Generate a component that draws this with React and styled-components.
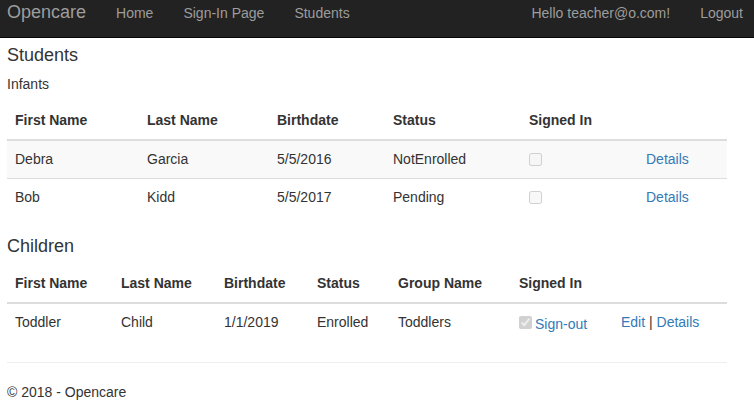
import styled, { createGlobalStyle } from "styled-components";

const GlobalStyle = createGlobalStyle`
  body {
    margin: 0;
    font-family: "Liberation Sans", Arial, sans-serif;
    font-size: 14px;
    line-height: 21px;
    color: #333;
    background: #fff;
  }
`;

const colors = {
  navBg: "#222",
  navBorder: "#080808",
  navText: "#9d9d9d",
  link: "#337ab7",
  border: "#ddd",
  stripe: "#f9f9f9",
};

const Navbar = styled.nav`
  display: flex;
  align-items: flex-start;
  height: 37px;
  padding-left: 7px;
  background: ${colors.navBg};
  border-bottom: 1px solid ${colors.navBorder};
  overflow: hidden;
`;

const Brand = styled.a`
  padding: 2px 15px 0 0;
  font-size: 18px;
  line-height: 20px;
  color: ${colors.navText};
  text-decoration: none;
`;

const NavGroup = styled.div`
  display: flex;
  margin-left: ${(props) => (props.$right ? "auto" : "0")};
  margin-right: ${(props) => (props.$right ? "-4px" : "0")};
`;

const NavLink = styled.a`
  padding: 3px 15px 0;
  line-height: 20px;
  color: ${colors.navText};
  text-decoration: none;
  white-space: nowrap;
`;

const Container = styled.main`
  width: 720px;
  padding: 7px 0 0 7px;
`;

const Heading = styled.h2`
  margin: 0 0 9px;
  font-size: 18px;
  font-weight: 500;
  line-height: 20px;
`;

const Subtitle = styled.p`
  margin: 0 0 7px;
`;

const Table = styled.table`
  width: 720px;
  table-layout: fixed;
  border-collapse: collapse;
  margin-bottom: 20px;

  th,
  td {
    padding: 8px;
    text-align: left;
    line-height: 21px;
    vertical-align: top;
    white-space: nowrap;
  }

  th {
    font-weight: bold;
    border-bottom: 2px solid ${colors.border};
  }

  tbody tr + tr td {
    border-top: 1px solid ${colors.border};
  }

  tbody tr:nth-of-type(odd) {
    background: ${(props) => (props.$striped ? colors.stripe : "transparent")};
  }
`;

const Col = styled.col`
  width: ${(props) => props.$w}px;
`;

const Check = styled.input`
  margin: 4px 0 0;
  width: 13px;
  height: 13px;
  vertical-align: top;
`;

const Link = styled.a`
  color: ${colors.link};
  text-decoration: none;
`;

const SignOut = styled(Link)`
  margin-left: 3px;
  position: relative;
  top: 2px;
`;

const Rule = styled.hr`
  margin: 21px 0 19px;
  border: 0;
  border-top: 1px solid #eee;
`;

const Footer = styled.footer`
  margin: 0;
`;

const infantCols = [132, 130, 116, 136, 117, 89];
const childCols = [106, 103, 93, 81, 121, 102, 114];

const infants = [
  { first: "Debra", last: "Garcia", birth: "5/5/2016", status: "NotEnrolled" },
  { first: "Bob", last: "Kidd", birth: "5/5/2017", status: "Pending" },
];

const children = [
  {
    first: "Toddler",
    last: "Child",
    birth: "1/1/2019",
    status: "Enrolled",
    group: "Toddlers",
  },
];

function App() {
  return (
    <>
      <GlobalStyle />
      <Navbar>
        <Brand href="#">Opencare</Brand>
        <NavGroup>
          <NavLink href="#">Home</NavLink>
          <NavLink href="#">Sign-In Page</NavLink>
          <NavLink href="#">Students</NavLink>
        </NavGroup>
        <NavGroup $right>
          <NavLink href="#">Hello teacher@o.com!</NavLink>
          <NavLink href="#">Logout</NavLink>
        </NavGroup>
      </Navbar>

      <Container>
        <Heading>Students</Heading>
        <Subtitle>Infants</Subtitle>
        <Table $striped>
          <colgroup>
            {infantCols.map((w, i) => (
              <Col key={i} $w={w} />
            ))}
          </colgroup>
          <thead>
            <tr>
              <th>First Name</th>
              <th>Last Name</th>
              <th>Birthdate</th>
              <th>Status</th>
              <th>Signed In</th>
              <th></th>
            </tr>
          </thead>
          <tbody>
            {infants.map((s) => (
              <tr key={s.first}>
                <td>{s.first}</td>
                <td>{s.last}</td>
                <td>{s.birth}</td>
                <td>{s.status}</td>
                <td>
                  <Check type="checkbox" disabled />
                </td>
                <td>
                  <Link href="#">Details</Link>
                </td>
              </tr>
            ))}
          </tbody>
        </Table>

        <Heading>Children</Heading>
        <Table>
          <colgroup>
            {childCols.map((w, i) => (
              <Col key={i} $w={w} />
            ))}
          </colgroup>
          <thead>
            <tr>
              <th>First Name</th>
              <th>Last Name</th>
              <th>Birthdate</th>
              <th>Status</th>
              <th>Group Name</th>
              <th>Signed In</th>
              <th></th>
            </tr>
          </thead>
          <tbody>
            {children.map((c) => (
              <tr key={c.first}>
                <td>{c.first}</td>
                <td>{c.last}</td>
                <td>{c.birth}</td>
                <td>{c.status}</td>
                <td>{c.group}</td>
                <td>
                  <Check type="checkbox" checked disabled readOnly />
                  <SignOut href="#">Sign-out</SignOut>
                </td>
                <td>
                  <Link href="#">Edit</Link> | <Link href="#">Details</Link>
                </td>
              </tr>
            ))}
          </tbody>
        </Table>

        <Rule />
        <Footer>© 2018 - Opencare</Footer>
      </Container>
    </>
  );
}

export default App;
